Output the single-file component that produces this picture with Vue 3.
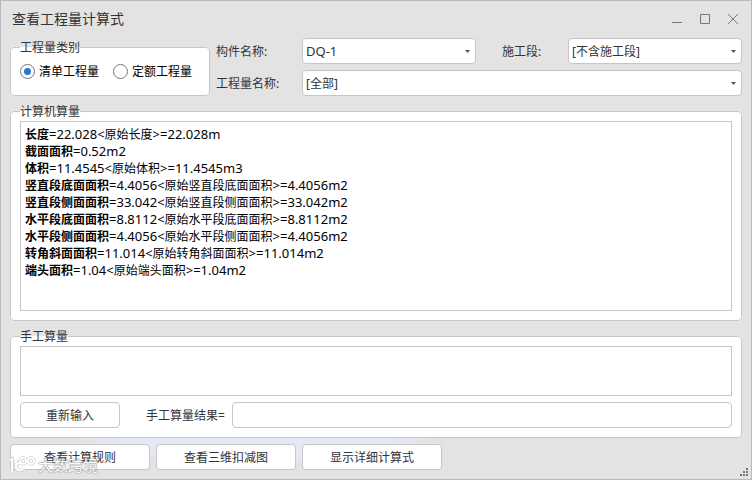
<script setup>
import { ref } from 'vue'

const kind = ref('list')
const component = ref('DQ-1')
const section = ref('[不含施工段]')
const quantity = ref('[全部]')
const manual = ref('')
const result = ref('')

const lines = [
  ['长度', '22.028', '长度', 'm'],
  ['截面面积', '0.52', '', 'm2'],
  ['体积', '11.4545', '体积', 'm3'],
  ['竖直段底面面积', '4.4056', '竖直段底面面积', 'm2'],
  ['竖直段侧面面积', '33.042', '竖直段侧面面积', 'm2'],
  ['水平段底面面积', '8.8112', '水平段底面面积', 'm2'],
  ['水平段侧面面积', '4.4056', '水平段侧面面积', 'm2'],
  ['转角斜面面积', '11.014', '转角斜面面积', 'm2'],
  ['端头面积', '1.04', '端头面积', 'm2'],
].map(([name, value, source, unit]) => ({ name, value, source, unit }))

function reset() {
  manual.value = ''
  result.value = ''
}
</script>

<template>
  <main class="window">
    <header class="titlebar">
      <h1>查看工程量计算式</h1>
      <div class="controls">
        <button type="button" aria-label="最小化">
          <svg viewBox="0 0 12 12"><path d="M1 9.5h10" /></svg>
        </button>
        <button type="button" aria-label="最大化">
          <svg viewBox="0 0 12 12"><path d="M1.5 1.5h9v9h-9z" /></svg>
        </button>
        <button type="button" aria-label="关闭">
          <svg viewBox="0 0 12 12"><path d="M1 1l10 10M11 1L1 11" /></svg>
        </button>
      </div>
    </header>

    <section class="filters">
      <fieldset class="group kinds">
        <legend>工程量类别</legend>
        <label><input v-model="kind" type="radio" name="kind" value="list" />清单工程量</label>
        <label><input v-model="kind" type="radio" name="kind" value="quota" />定额工程量</label>
      </fieldset>
      <div class="fields">
        <label for="component">构件名称:</label>
        <div class="combo">
          <select id="component" v-model="component" class="latin"><option>DQ-1</option></select>
          <svg viewBox="0 0 5 3"><path d="M0 0h5L2.5 3z" /></svg>
        </div>
        <label for="section" class="second">施工段:</label>
        <div class="combo">
          <select id="section" v-model="section"><option>[不含施工段]</option></select>
          <svg viewBox="0 0 5 3"><path d="M0 0h5L2.5 3z" /></svg>
        </div>
        <label for="quantity">工程量名称:</label>
        <div class="combo wide">
          <select id="quantity" v-model="quantity"><option>[全部]</option></select>
          <svg viewBox="0 0 5 3"><path d="M0 0h5L2.5 3z" /></svg>
        </div>
      </div>
    </section>

    <fieldset class="group computed">
      <legend>计算机算量</legend>
      <div class="output">
        <p v-for="line in lines" :key="line.name">
          <b>{{ line.name }}</b><span class="latin">={{ line.value }}</span><template v-if="line.source"><span class="latin">&lt;</span>原始{{ line.source }}<span class="latin">&gt;={{ line.value }}</span></template><span class="latin">{{ line.unit }}</span>
        </p>
      </div>
    </fieldset>

    <fieldset class="group">
      <legend>手工算量</legend>
      <textarea v-model="manual" aria-label="手工算量"></textarea>
      <div class="result">
        <button type="button" class="btn small" @click="reset">重新输入</button>
        <label for="result">手工算量结果=</label>
        <input id="result" v-model="result" type="text" />
      </div>
    </fieldset>

    <footer class="actions">
      <button type="button" class="btn">查看计算规则</button>
      <button type="button" class="btn">查看三维扣减图</button>
      <button type="button" class="btn">显示详细计算式</button>
    </footer>

    <div class="watermark">
      <svg viewBox="0 0 28 18">
        <g class="halo"><path d="M1.5 4.5L4 3V16" /><path d="M8 4V11A4 4 0 0 0 15 13" /><path d="M8 11C8 8 10 7 12 7" /><circle cx="15" cy="5" r="3" /><circle cx="23" cy="5" r="3" /></g>
        <g class="ink"><path d="M1.5 4.5L4 3V16" /><path d="M8 4V11A4 4 0 0 0 15 13" /><path d="M8 11C8 8 10 7 12 7" /><circle cx="15" cy="5" r="3" /><circle cx="23" cy="5" r="3" /></g>
      </svg>
      <span>大数跨境</span>
    </div>
    <svg class="grip" viewBox="0 0 8 8">
      <path d="M6 0h2v2H6zM3 3h2v2H3zM6 3h2v2H6zM0 6h2v2H0zM3 6h2v2H3zM6 6h2v2H6z" />
    </svg>
  </main>
</template>

<style>
body {
  margin: 0;
}
</style>

<style scoped>
* {
  box-sizing: border-box;
}
.window {
  position: relative;
  display: flex;
  flex-direction: column;
  min-height: 100vh;
  padding: 0 9px 9px;
  border: 1px solid #b9b9b9;
  background: #e3e3e3;
  color: #333;
  font: 12px/17px "Noto Sans", "Noto Sans CJK SC", sans-serif;
}
button,
input,
select,
textarea {
  margin: 0;
  color: inherit;
  font: inherit;
}
.titlebar {
  display: flex;
  align-items: center;
  justify-content: space-between;
  height: 36px;
  margin-bottom: 1px;
  padding: 0 3px 0 2px;
}
h1 {
  margin: 0;
  font-size: 14px;
  line-height: 20px;
  font-weight: 400;
}
.controls {
  display: flex;
  gap: 16px;
}
.controls button {
  display: flex;
  padding: 0;
  border: 0;
  background: none;
}
.controls svg {
  width: 12px;
  height: 12px;
  fill: none;
  stroke: #777;
}
.filters {
  display: flex;
  gap: 6px;
  margin-bottom: 8px;
}
.group {
  display: flex;
  flex-direction: column;
  min-width: 0;
  margin: 0;
  padding: 2px 9px 9px;
  border: 1px solid #c6c6c6;
  border-radius: 4px;
  background: #fff;
}
legend {
  padding: 0;
  line-height: 15px;
}
.kinds {
  flex-direction: row;
  align-items: center;
  gap: 14px;
  width: 200px;
  margin-top: 2px;
  padding: 1px 9px 8px;
  color: #000;
}
.kinds legend {
  color: #333;
}
.kinds label {
  display: flex;
  align-items: center;
  gap: 4px;
}
.kinds input {
  display: grid;
  place-items: center;
  width: 15px;
  height: 15px;
  border: 1px solid #777;
  border-radius: 50%;
  background: #fff;
  appearance: none;
}
.kinds input:checked::before {
  width: 7px;
  height: 7px;
  border-radius: 50%;
  background: #2878d0;
  content: "";
}
.fields {
  display: grid;
  flex: 1;
  grid-template-columns: 86px 1fr 92px 1fr;
  gap: 6px 0;
  align-items: center;
}
.second {
  padding-left: 26px;
}
.combo {
  position: relative;
}
.wide {
  grid-column: span 3;
}
.combo select {
  display: block;
  width: 100%;
  height: 26px;
  padding: 0 16px 0 3px;
  border: 1px solid #c6c6c6;
  border-radius: 4px;
  background: #fff;
  appearance: none;
}
.combo svg {
  position: absolute;
  top: 12px;
  right: 6px;
  width: 5px;
  height: 3px;
  fill: #555;
  pointer-events: none;
}
.latin,
.combo .latin {
  font-size: 13px;
}
.computed {
  flex: 1;
  margin-bottom: 8px;
}
.output {
  flex: 1;
  min-height: 190px;
  padding: 4px;
  border: 1px solid #c6c6c6;
  color: #000;
}
.output p {
  height: 17px;
  margin: 0;
  white-space: nowrap;
}
textarea {
  display: block;
  width: 100%;
  height: 50px;
  padding: 4px;
  border: 1px solid #c6c6c6;
  border-radius: 0;
  resize: none;
}
.result {
  display: flex;
  align-items: center;
  margin-top: 6px;
}
.result label {
  padding: 0 7px 0 26px;
}
.result input {
  flex: 1;
  min-width: 0;
  height: 26px;
  padding: 0 4px;
  border: 1px solid #c6c6c6;
  border-radius: 4px;
}
.btn {
  width: 140px;
  height: 26px;
  padding: 0;
  border: 1px solid #c6c6c6;
  border-radius: 4px;
  background: #fff;
}
.small {
  width: 100px;
}
.actions {
  display: flex;
  gap: 6px;
  padding-top: 6px;
  background: radial-gradient(ellipse 180px 26px at 245px 0, #e4e9f5 75%, #e3e3e3);
}
.watermark {
  position: absolute;
  bottom: 5px;
  left: 7px;
  display: flex;
  align-items: center;
  gap: 2px;
  color: #fff;
  font-size: 15px;
  text-shadow: 0 0 1px #888, 0 0 1px #999, 0 0 2px #aaa;
  pointer-events: none;
}
.watermark svg {
  width: 28px;
  height: 18px;
  fill: none;
}
.halo {
  stroke: #bbb;
  stroke-width: 3;
}
.ink {
  stroke: #fff;
  stroke-width: 2;
}
.grip {
  position: absolute;
  right: 3px;
  bottom: 3px;
  width: 8px;
  height: 8px;
  fill: #777;
}
</style>
